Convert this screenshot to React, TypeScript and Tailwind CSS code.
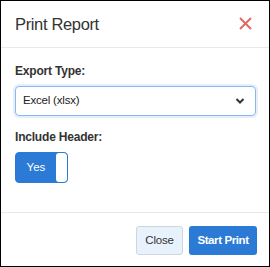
import React from "react";

export default function App() {
  return (
    <div
      className="w-[270px] h-[267px] border border-black bg-white flex flex-col text-[#333]"
      style={{ fontFamily: '"Liberation Sans", Arial, sans-serif' }}
    >
      <div className="h-[47px] flex items-center justify-between pl-[14px] pr-[17px] border-b border-[#e9e9e9] shrink-0">
        <span className="text-[16.5px] tracking-[-0.35px] leading-none text-[#333] mt-[1px]">Print Report</span>
        <svg width="13" height="13" viewBox="0 0 13 13" className="mt-[-1px]">
          <path d="M1 1L12 12M12 1L1 12" stroke="#e26666" strokeWidth="1.9" strokeLinecap="butt" />
        </svg>
      </div>
      <div className="flex-1 px-[14px] pt-[16px]">
        <div className="text-[12px] tracking-[-0.2px] font-bold leading-[15px]">Export Type:</div>
        <div className="mt-[7px] h-[30px] w-[241px] rounded-[4px] border border-[#86b7ee] shadow-[0_0_0_2px_rgba(42,122,214,0.12)] flex items-center justify-between pl-[7px] pr-[10px]">
          <span className="text-[11.5px] tracking-[-0.2px] text-[#222]">Excel (xlsx)</span>
          <svg width="10" height="8" viewBox="0 0 10 8">
            <path d="M1.5 2L5 5.5L8.5 2" stroke="#333" strokeWidth="2" fill="none" />
          </svg>
        </div>
        <div className="mt-[14px] text-[12px] tracking-[-0.2px] font-bold leading-[15px]">Include Header:</div>
        <div className="mt-[7px] h-[31px] w-[53px] rounded-[4px] border border-[#2a7ad6] bg-[#2a7ad6] flex overflow-hidden">
          <div className="w-[40px] flex items-center justify-center text-white text-[11.5px]">Yes</div>
          <div className="flex-1 bg-white rounded-[3px]"></div>
        </div>
      </div>
      <div className="h-[54px] border-t border-[#e9e9e9] flex items-start justify-end gap-[6px] pt-[13px] pr-[12px] shrink-0">
        <button className="h-[29px] w-[47px] rounded-[3px] border border-[#cfd6de] bg-[#e8f2fc] text-[11.5px] tracking-[-0.2px] text-[#333]">
          Close
        </button>
        <button className="h-[29px] w-[68px] rounded-[3px] bg-[#2a7ad6] text-white text-[11.5px] tracking-[-0.4px] font-bold">
          Start Print
        </button>
      </div>
    </div>
  );
}
